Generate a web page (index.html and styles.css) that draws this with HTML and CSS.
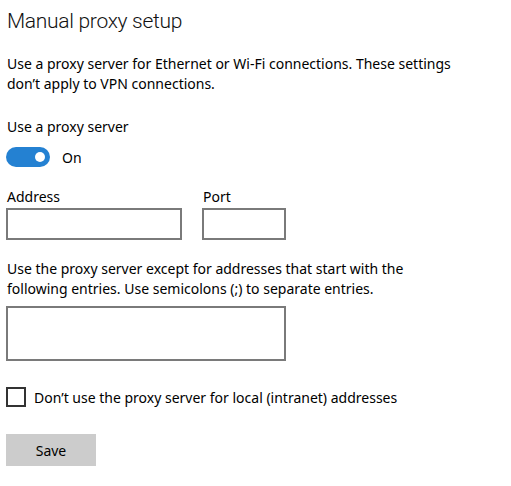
FILE: index.html
```html
<!DOCTYPE html>
<html lang="en">
<head>
    <meta charset="UTF-8">
    <meta name="viewport" content="width=device-width, initial-scale=1.0">
    <link rel="stylesheet" href="styles.css">
</head>
<body>
<div class="proxy-page">
    <h1 class="page-title">Manual proxy setup</h1>
    <p class="desc">Use a proxy server for Ethernet or Wi-Fi connections. These settings don’t apply to VPN connections.</p>

    <div class="field-label">Use a proxy server</div>
    <div class="toggle-row">
        <span class="toggle"><span class="knob"></span></span>
        <span class="toggle-text">On</span>
    </div>

    <div class="addr-row">
        <div class="field">
            <label class="small-label">Address</label>
            <input type="text" class="box addr-box">
        </div>
        <div class="field">
            <label class="small-label">Port</label>
            <input type="text" class="box port-box">
        </div>
    </div>

    <p class="desc except">Use the proxy server except for addresses that start with the following entries. Use semicolons (;) to separate entries.</p>
    <textarea class="box except-box"></textarea>

    <label class="check-row">
        <span class="checkbox"></span>
        <span>Don’t use the proxy server for local (intranet) addresses</span>
    </label>

    <button class="save-btn">Save</button>
</div>
</body>
</html>
```

FILE: styles.css
```css
body {
    margin: 0;
    font-family: "Noto Sans", sans-serif;
    font-size: 14px;
    color: #000;
    background: #fff;
}

.proxy-page {
    padding: 5px 6px 0 6px;
    width: 470px;
}

.page-title {
    font-family: Roboto, "Noto Sans", sans-serif;
    font-weight: 300;
    font-size: 21px;
    letter-spacing: -0.3px;
    line-height: 32px;
    margin: 0 0 0 1px;
    color: #111;
}

.desc {
    margin: 17px 0 0 1px;
    line-height: 20px;
    width: 455px;
}

.field-label {
    margin: 23px 0 0 1px;
    line-height: 20px;
}

.toggle-row {
    display: flex;
    align-items: center;
    gap: 12px;
    margin-top: 10px;
}

.toggle {
    display: flex;
    align-items: center;
    justify-content: flex-end;
    width: 44px;
    height: 20px;
    border-radius: 10px;
    background: #2481d2;
    box-sizing: border-box;
    padding-right: 5px;
}

.knob {
    width: 10px;
    height: 10px;
    border-radius: 50%;
    background: #fff;
}

.addr-row {
    display: flex;
    gap: 20px;
    margin-top: 20px;
}

.field {
    display: flex;
    flex-direction: column;
}

.small-label {
    line-height: 20px;
    margin-left: 1px;
}

.box {
    display: block;
    box-sizing: border-box;
    border: 2px solid #7a7a7a;
    background: #fff;
    margin: 1px 0 0 0;
    padding: 0;
    outline: none;
    font: inherit;
}

.addr-box {
    width: 176px;
    height: 32px;
}

.port-box {
    width: 84px;
    height: 32px;
}

.desc.except {
    margin-top: 19px;
}

.except-box {
    width: 280px;
    height: 55px;
    margin-top: 7px;
    resize: none;
}

.check-row {
    display: flex;
    align-items: center;
    gap: 8px;
    margin-top: 26px;
}

.checkbox {
    width: 20px;
    height: 20px;
    box-sizing: border-box;
    border: 2px solid #333;
}

.save-btn {
    display: block;
    margin-top: 27px;
    width: 90px;
    height: 32px;
    border: none;
    background: #cccccc;
    font: inherit;
    color: #000;
}
```
